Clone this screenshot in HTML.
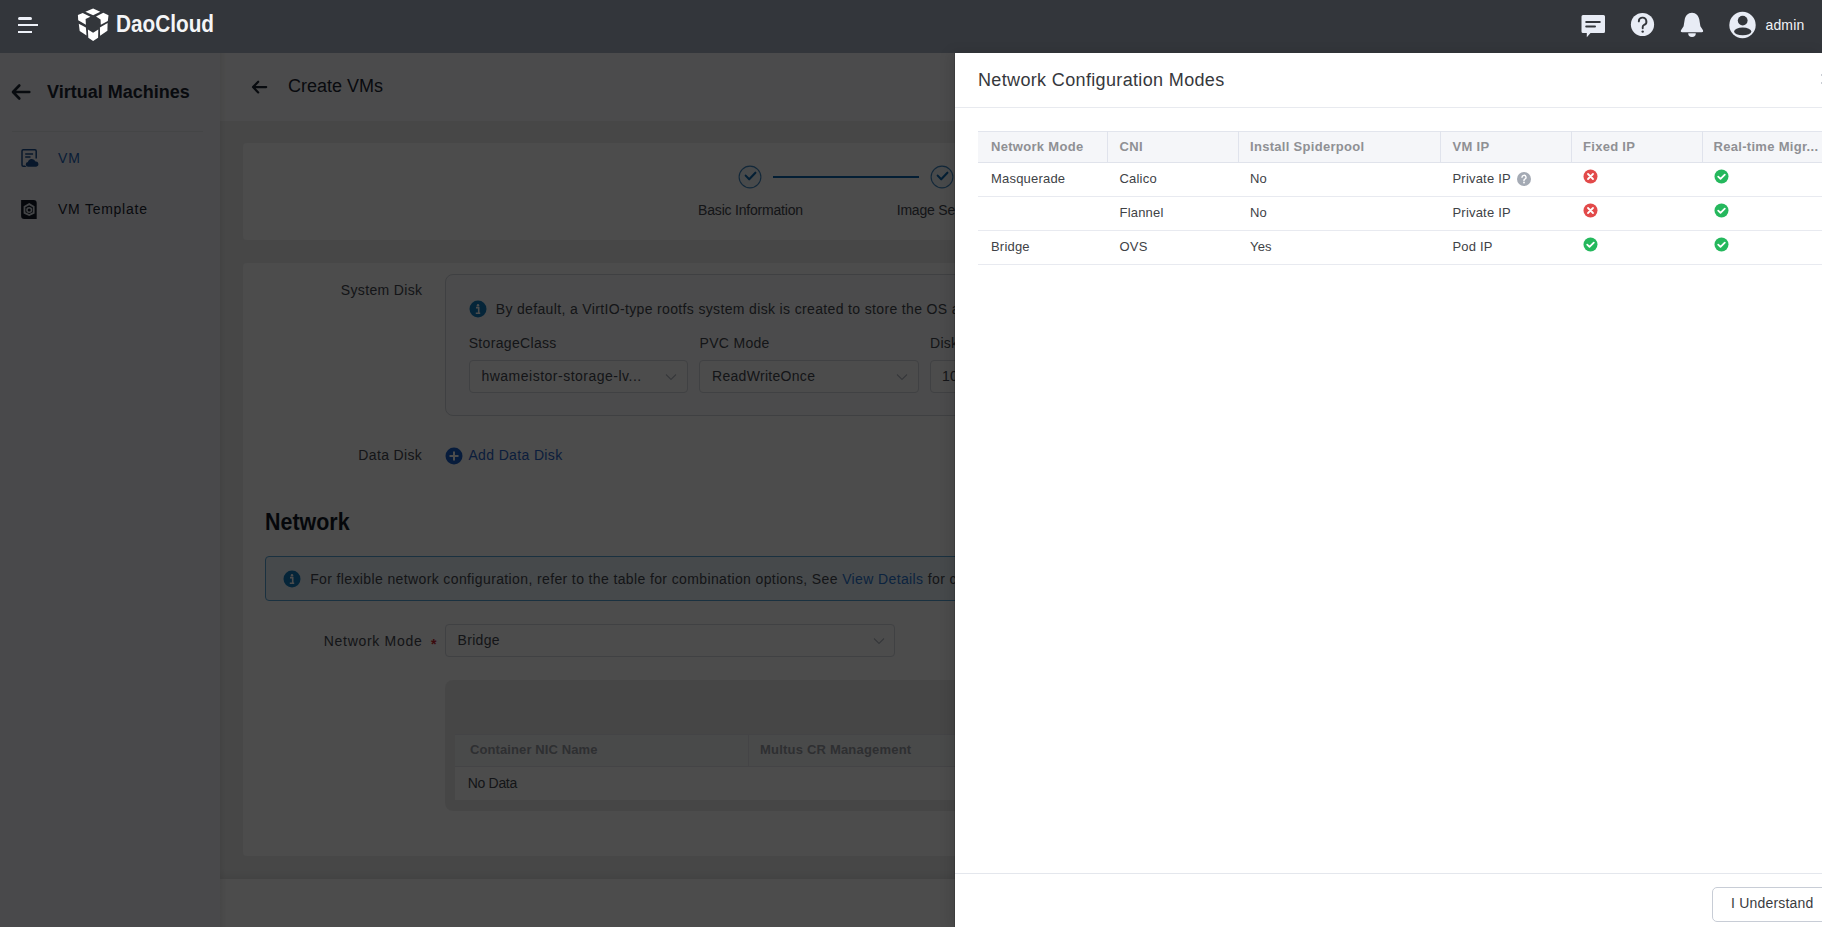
<!DOCTYPE html>
<html><head><meta charset="utf-8"><title>Create VMs</title>
<style>
html,body{margin:0;padding:0;}
body{width:1822px;height:927px;overflow:hidden;position:relative;font-family:"Liberation Sans", sans-serif;background:#f2f3f5;}
</style></head><body>
<div style="position:absolute;left:0px;top:0px;width:1822px;height:53px;background:#33363b;"></div>
<div style="position:absolute;left:0px;top:53px;width:220px;height:874px;background:#f4f6fa;"></div>
<div style="position:absolute;left:220px;top:53px;width:1602px;height:874px;background:#eeefef;"></div>
<div style="position:absolute;left:220px;top:53px;width:1602px;height:68px;background:#fcfcfd;"></div>
<div style="position:absolute;left:243px;top:143px;width:1556px;height:97px;background:#fdfdfd;border-radius:4px;"></div>
<div style="position:absolute;left:243px;top:263px;width:1556px;height:593px;background:#fdfdfd;border-radius:4px;"></div>
<div style="position:absolute;left:220px;top:869px;width:1602px;height:10px;background:linear-gradient(to bottom, rgba(0,0,0,0), rgba(0,0,0,0.06));"></div>
<div style="position:absolute;left:220px;top:879px;width:1602px;height:48px;background:#fdfdfd;"></div>
<div style="position:absolute;left:220px;top:53px;width:6px;height:874px;background:linear-gradient(to right, rgba(0,0,0,0.06), rgba(0,0,0,0));"></div>
<svg style="position:absolute;left:10px;top:82px" width="22" height="20" viewBox="0 0 22 20"><path d="M19.3 10H3.2M9.3 3.5L3 10L9.3 16.5" fill="none" stroke="#1c2533" stroke-width="2.6" stroke-linecap="round" stroke-linejoin="round"/></svg>
<div style="position:absolute;top:79.55px;font-size:18px;line-height:25px;color:#1c2533;font-weight:700;white-space:nowrap;left:47px;">Virtual Machines</div>
<div style="position:absolute;left:12px;top:131px;width:191px;height:1px;background:#e4e6ea;"></div>
<svg style="position:absolute;left:20px;top:148px" width="20" height="20" viewBox="0 0 20 20"><path d="M8 18.2H3.2A1.2 1.2 0 0 1 2 17V3A1.2 1.2 0 0 1 3.2 1.8H15A1.2 1.2 0 0 1 16.2 3V10.5" fill="none" stroke="#1d4f91" stroke-width="1.5"/><path d="M5.2 6H13.1M5.2 9H10.5" stroke="#1d4f91" stroke-width="1.5"/><path d="M8.2 18.7A2.3 2.3 0 0 1 7.9 14.1A4 4 0 0 1 15.5 13.5A2.6 2.6 0 0 1 16.1 18.7Z" fill="#1d4f91" stroke="#f4f6fa" stroke-width="1.2" paint-order="stroke"/></svg>
<div style="position:absolute;top:148.14px;font-size:14px;line-height:20px;color:#2463b8;font-weight:400;white-space:nowrap;letter-spacing:0.9px;left:58px;">VM</div>
<svg style="position:absolute;left:20px;top:199px" width="20" height="22" viewBox="0 0 20 22"><path d="M1.1 1.1H13.7A3 3 0 0 1 16.7 4.1V19.9H4.1A3 3 0 0 1 1.1 16.9Z" fill="#111a27"/><path d="M9.2 5.1L13.7 7.7V13.9L9.2 16.1L4.5 13.9V7.7Z" fill="none" stroke="#dfe5ec" stroke-width="1.8"/><circle cx="9.2" cy="11" r="2.3" fill="none" stroke="#dfe5ec" stroke-width="1.5"/></svg>
<div style="position:absolute;top:198.84px;font-size:14px;line-height:20px;color:#1c2533;font-weight:400;white-space:nowrap;letter-spacing:0.75px;left:58px;">VM Template</div>
<svg style="position:absolute;left:250px;top:78px" width="20" height="18" viewBox="0 0 20 18"><path d="M16.2 9.1H3.2M8.2 3.7L3 9.1l5.2 5.3" fill="none" stroke="#1c2533" stroke-width="2.2" stroke-linecap="round" stroke-linejoin="round"/></svg>
<div style="position:absolute;top:74.45px;font-size:18px;line-height:25px;color:#1c2533;font-weight:400;white-space:nowrap;left:288px;">Create VMs</div>
<svg style="position:absolute;left:738.4px;top:165px" width="24" height="24" viewBox="0 0 24 24"><circle cx="12" cy="12" r="10.9" fill="#f1f7fc" stroke="#3f86c0" stroke-width="1.1"/><path d="M7.7 10.6l3.5 3.7 6.2-6.6" fill="none" stroke="#0f6ab0" stroke-width="2.1" stroke-linecap="round" stroke-linejoin="round"/></svg>
<div style="position:absolute;left:773px;top:176px;width:146px;height:2px;background:#0d67ad;"></div>
<svg style="position:absolute;left:930px;top:165px" width="24" height="24" viewBox="0 0 24 24"><circle cx="12" cy="12" r="10.9" fill="#f1f7fc" stroke="#3f86c0" stroke-width="1.1"/><path d="M7.7 10.6l3.5 3.7 6.2-6.6" fill="none" stroke="#0f6ab0" stroke-width="2.1" stroke-linecap="round" stroke-linejoin="round"/></svg>
<div style="position:absolute;top:200.44px;font-size:14px;line-height:20px;color:#454950;font-weight:400;white-space:nowrap;letter-spacing:-0.2px;left:450.5px;width:600px;text-align:center;">Basic Information</div>
<div style="position:absolute;top:200.44px;font-size:14px;line-height:20px;color:#454950;font-weight:400;white-space:nowrap;letter-spacing:-0.2px;left:896.7px;">Image Settings</div>
<div style="position:absolute;top:280.34px;font-size:14px;line-height:20px;color:#454950;font-weight:400;white-space:nowrap;letter-spacing:0.35px;left:-177.60000000000002px;width:600px;text-align:right;margin-right:-0.35px;">System Disk</div>
<div style="position:absolute;left:445px;top:274px;width:1340px;height:142px;box-sizing:border-box;border:1px solid #d2d6dc;border-radius:8px;background:#fbfcfd;"></div>
<svg style="position:absolute;left:468.6px;top:300.3px" width="18" height="18" viewBox="0 0 18 18"><circle cx="9" cy="9" r="8.5" fill="#137cc0"/><circle cx="9" cy="5.2" r="1.2" fill="#fff"/><path d="M7 7.6h2.7v5.4M6.8 13.2h4.4" fill="none" stroke="#fff" stroke-width="1.6"/></svg>
<div style="position:absolute;top:299.24px;font-size:14px;line-height:20px;color:#454950;font-weight:400;white-space:nowrap;letter-spacing:0.35px;left:495.7px;">By default, a VirtIO-type rootfs system disk is created to store the OS and data. The disk is automatically deleted.</div>
<div style="position:absolute;top:332.84px;font-size:14px;line-height:20px;color:#454950;font-weight:400;white-space:nowrap;letter-spacing:0.33px;left:468.7px;">StorageClass</div>
<div style="position:absolute;top:332.84px;font-size:14px;line-height:20px;color:#454950;font-weight:400;white-space:nowrap;letter-spacing:0.3px;left:699.6px;">PVC Mode</div>
<div style="position:absolute;top:332.84px;font-size:14px;line-height:20px;color:#454950;font-weight:400;white-space:nowrap;letter-spacing:0.3px;left:930px;">Disk Capacity</div>
<div style="position:absolute;left:469px;top:360px;width:219px;height:33px;box-sizing:border-box;border:1px solid #d5d9e0;border-radius:4px;background:#fff;"></div>
<div style="position:absolute;top:366.04px;font-size:14px;line-height:20px;color:#454950;font-weight:400;white-space:nowrap;letter-spacing:0.5px;left:481.4px;">hwameistor-storage-lv...</div>
<svg style="position:absolute;left:665px;top:372.5px" width="12" height="8" viewBox="0 0 12 8"><path d="M1 1.5l5 5 5-5" fill="none" stroke="#b3b9c3" stroke-width="1.1"/></svg>
<div style="position:absolute;left:699px;top:360px;width:220px;height:33px;box-sizing:border-box;border:1px solid #d5d9e0;border-radius:4px;background:#fff;"></div>
<div style="position:absolute;top:366.04px;font-size:14px;line-height:20px;color:#454950;font-weight:400;white-space:nowrap;letter-spacing:0.3px;left:712px;">ReadWriteOnce</div>
<svg style="position:absolute;left:895.5px;top:372.5px" width="12" height="8" viewBox="0 0 12 8"><path d="M1 1.5l5 5 5-5" fill="none" stroke="#b3b9c3" stroke-width="1.1"/></svg>
<div style="position:absolute;left:930px;top:360px;width:220px;height:33px;box-sizing:border-box;border:1px solid #d5d9e0;border-radius:4px;background:#fff;"></div>
<div style="position:absolute;top:366.04px;font-size:14px;line-height:20px;color:#454950;font-weight:400;white-space:nowrap;letter-spacing:0.3px;left:942px;">10</div>
<svg style="position:absolute;left:1124px;top:372.5px" width="12" height="8" viewBox="0 0 12 8"><path d="M1 1.5l5 5 5-5" fill="none" stroke="#b3b9c3" stroke-width="1.1"/></svg>
<div style="position:absolute;top:445.14px;font-size:14px;line-height:20px;color:#454950;font-weight:400;white-space:nowrap;letter-spacing:0.35px;left:-177.8px;width:600px;text-align:right;margin-right:-0.35px;">Data Disk</div>
<svg style="position:absolute;left:445px;top:446.5px" width="18" height="18" viewBox="0 0 18 18"><circle cx="9" cy="9" r="8.5" fill="#1a5fc8"/><path d="M9 4.5v9M4.5 9h9" stroke="#fff" stroke-width="2"/></svg>
<div style="position:absolute;top:445.14px;font-size:14px;line-height:20px;color:#2a66c9;font-weight:400;white-space:nowrap;letter-spacing:0.36px;left:468.4px;">Add Data Disk</div>
<div style="position:absolute;top:504.67px;font-size:24px;line-height:34px;color:#111a27;font-weight:700;white-space:nowrap;left:264.5px;transform:scaleX(0.893);transform-origin:0 0;">Network</div>
<div style="position:absolute;left:265px;top:556px;width:1520px;height:45px;box-sizing:border-box;border:1px solid #58a6d8;border-radius:4px;background:#ebf5fb;"></div>
<svg style="position:absolute;left:283.4px;top:570.1px" width="18" height="18" viewBox="0 0 18 18"><circle cx="9" cy="9" r="8.5" fill="#137cc0"/><circle cx="9" cy="5.2" r="1.2" fill="#fff"/><path d="M7 7.6h2.7v5.4M6.8 13.2h4.4" fill="none" stroke="#fff" stroke-width="1.6"/></svg>
<div style="position:absolute;top:569.44px;font-size:14px;line-height:20px;color:#454950;font-weight:400;white-space:nowrap;letter-spacing:0.376px;left:310.2px;">For flexible network configuration, refer to the table for combination options, See <span style="color:#2a76d2">View Details</span> for combination options.</div>
<div style="position:absolute;top:631.14px;font-size:14px;line-height:20px;color:#454950;font-weight:400;white-space:nowrap;letter-spacing:0.7px;left:-177.60000000000002px;width:600px;text-align:right;margin-right:-0.7px;">Network Mode</div>
<div style="position:absolute;top:634.14px;font-size:14px;line-height:20px;color:#c8242f;font-weight:700;white-space:nowrap;left:431px;">*</div>
<div style="position:absolute;left:445px;top:624px;width:450px;height:33px;box-sizing:border-box;border:1px solid #d5d9e0;border-radius:4px;background:#fff;"></div>
<div style="position:absolute;top:630.04px;font-size:14px;line-height:20px;color:#454950;font-weight:400;white-space:nowrap;letter-spacing:0.3px;left:457.6px;">Bridge</div>
<svg style="position:absolute;left:872.5px;top:636.5px" width="12" height="8" viewBox="0 0 12 8"><path d="M1 1.5l5 5 5-5" fill="none" stroke="#b3b9c3" stroke-width="1.1"/></svg>
<div style="position:absolute;left:445px;top:680px;width:1340px;height:131px;background:#ececec;border-radius:8px;"></div>
<div style="position:absolute;left:455px;top:735px;width:1320px;height:65px;background:#fff;"></div>
<div style="position:absolute;left:455px;top:734px;width:1320px;height:33px;background:#f6f7f9;border-top:1px solid #e3e5e9;border-bottom:1px solid #e3e5e9;box-sizing:border-box;"></div>
<div style="position:absolute;left:748px;top:735px;width:1px;height:31px;background:#e3e5e9;"></div>
<div style="position:absolute;top:740.69px;font-size:13px;line-height:18px;color:#9a9ea6;font-weight:700;white-space:nowrap;letter-spacing:0.1px;left:470px;">Container NIC Name</div>
<div style="position:absolute;top:740.69px;font-size:13px;line-height:18px;color:#9a9ea6;font-weight:700;white-space:nowrap;letter-spacing:0.2px;left:760px;">Multus CR Management</div>
<div style="position:absolute;top:773.44px;font-size:14px;line-height:20px;color:#454950;font-weight:400;white-space:nowrap;letter-spacing:-0.3px;left:467.7px;">No Data</div>
<div style="position:absolute;left:0px;top:53px;width:1822px;height:874px;background:rgba(0,0,0,0.7);"></div>
<div style="position:absolute;left:955px;top:53px;width:867px;height:874px;background:#fff;box-shadow:-4px 0 12px rgba(0,0,0,0.12);"></div>
<div style="position:absolute;left:954px;top:53px;width:1px;height:874px;background:rgba(0,0,0,0.12);"></div>
<div style="position:absolute;top:68.25px;font-size:18px;line-height:25px;color:#36383c;font-weight:400;white-space:nowrap;letter-spacing:0.35px;left:978px;">Network Configuration Modes</div>
<div style="position:absolute;left:955px;top:107px;width:867px;height:1px;background:#e8eaef;"></div>
<div style="position:absolute;left:978px;top:131px;width:900px;height:31px;background:#f5f6f9;"></div>
<div style="position:absolute;left:978px;top:131px;width:900px;height:1px;background:#e2e5ed;"></div>
<div style="position:absolute;left:978px;top:162px;width:900px;height:1px;background:#e0e3eb;"></div>
<div style="position:absolute;left:1107px;top:131px;width:1px;height:31px;background:#e0e3ec;"></div>
<div style="position:absolute;left:1238px;top:131px;width:1px;height:31px;background:#e0e3ec;"></div>
<div style="position:absolute;left:1440px;top:131px;width:1px;height:31px;background:#e0e3ec;"></div>
<div style="position:absolute;left:1571px;top:131px;width:1px;height:31px;background:#e0e3ec;"></div>
<div style="position:absolute;left:1702px;top:131px;width:1px;height:31px;background:#e0e3ec;"></div>
<div style="position:absolute;left:978px;top:196px;width:900px;height:1px;background:#e8eaf0;"></div>
<div style="position:absolute;left:978px;top:230px;width:900px;height:1px;background:#e8eaf0;"></div>
<div style="position:absolute;left:978px;top:264px;width:900px;height:1px;background:#e8eaf0;"></div>
<div style="position:absolute;top:137.79px;font-size:13px;line-height:18px;color:#8f9094;font-weight:700;white-space:nowrap;letter-spacing:0.3px;left:991px;">Network Mode</div>
<div style="position:absolute;top:137.79px;font-size:13px;line-height:18px;color:#8f9094;font-weight:700;white-space:nowrap;letter-spacing:0.3px;left:1119.5px;">CNI</div>
<div style="position:absolute;top:137.79px;font-size:13px;line-height:18px;color:#8f9094;font-weight:700;white-space:nowrap;letter-spacing:0.3px;left:1250px;">Install Spiderpool</div>
<div style="position:absolute;top:137.79px;font-size:13px;line-height:18px;color:#8f9094;font-weight:700;white-space:nowrap;letter-spacing:0.3px;left:1452.5px;">VM IP</div>
<div style="position:absolute;top:137.79px;font-size:13px;line-height:18px;color:#8f9094;font-weight:700;white-space:nowrap;letter-spacing:0.3px;left:1583px;">Fixed IP</div>
<div style="position:absolute;top:137.79px;font-size:13px;line-height:18px;color:#8f9094;font-weight:700;white-space:nowrap;letter-spacing:0.3px;left:1713.5px;">Real-time Migr...</div>
<div style="position:absolute;top:169.79px;font-size:13px;line-height:18px;color:#404246;font-weight:400;white-space:nowrap;letter-spacing:0.2px;left:991px;">Masquerade</div>
<div style="position:absolute;top:169.79px;font-size:13px;line-height:18px;color:#404246;font-weight:400;white-space:nowrap;letter-spacing:0.2px;left:1119.5px;">Calico</div>
<div style="position:absolute;top:169.79px;font-size:13px;line-height:18px;color:#404246;font-weight:400;white-space:nowrap;letter-spacing:0.2px;left:1250px;">No</div>
<div style="position:absolute;top:169.79px;font-size:13px;line-height:18px;color:#404246;font-weight:400;white-space:nowrap;letter-spacing:0.2px;left:1452.5px;">Private IP</div>
<svg style="position:absolute;left:1583.0px;top:169.2px" width="15" height="15" viewBox="0 0 15 15"><circle cx="7.5" cy="7.5" r="7" fill="#e24a4a"/><path d="M5 5l5 5M10 5l-5 5" fill="none" stroke="#fff" stroke-width="1.8" stroke-linecap="round"/></svg>
<svg style="position:absolute;left:1714.0px;top:169.2px" width="15" height="15" viewBox="0 0 15 15"><circle cx="7.5" cy="7.5" r="7" fill="#25b85d"/><path d="M4.2 7.6l2.3 2.3 4.3-4.3" fill="none" stroke="#fff" stroke-width="1.8" stroke-linecap="round" stroke-linejoin="round"/></svg>
<div style="position:absolute;top:203.79px;font-size:13px;line-height:18px;color:#404246;font-weight:400;white-space:nowrap;letter-spacing:0.2px;left:1119.5px;">Flannel</div>
<div style="position:absolute;top:203.79px;font-size:13px;line-height:18px;color:#404246;font-weight:400;white-space:nowrap;letter-spacing:0.2px;left:1250px;">No</div>
<div style="position:absolute;top:203.79px;font-size:13px;line-height:18px;color:#404246;font-weight:400;white-space:nowrap;letter-spacing:0.2px;left:1452.5px;">Private IP</div>
<svg style="position:absolute;left:1583.0px;top:203.0px" width="15" height="15" viewBox="0 0 15 15"><circle cx="7.5" cy="7.5" r="7" fill="#e24a4a"/><path d="M5 5l5 5M10 5l-5 5" fill="none" stroke="#fff" stroke-width="1.8" stroke-linecap="round"/></svg>
<svg style="position:absolute;left:1714.0px;top:203.0px" width="15" height="15" viewBox="0 0 15 15"><circle cx="7.5" cy="7.5" r="7" fill="#25b85d"/><path d="M4.2 7.6l2.3 2.3 4.3-4.3" fill="none" stroke="#fff" stroke-width="1.8" stroke-linecap="round" stroke-linejoin="round"/></svg>
<div style="position:absolute;top:237.79px;font-size:13px;line-height:18px;color:#404246;font-weight:400;white-space:nowrap;letter-spacing:0.2px;left:991px;">Bridge</div>
<div style="position:absolute;top:237.79px;font-size:13px;line-height:18px;color:#404246;font-weight:400;white-space:nowrap;letter-spacing:0.2px;left:1119.5px;">OVS</div>
<div style="position:absolute;top:237.79px;font-size:13px;line-height:18px;color:#404246;font-weight:400;white-space:nowrap;letter-spacing:0.2px;left:1250px;">Yes</div>
<div style="position:absolute;top:237.79px;font-size:13px;line-height:18px;color:#404246;font-weight:400;white-space:nowrap;letter-spacing:0.2px;left:1452.5px;">Pod IP</div>
<svg style="position:absolute;left:1583.0px;top:237.2px" width="15" height="15" viewBox="0 0 15 15"><circle cx="7.5" cy="7.5" r="7" fill="#25b85d"/><path d="M4.2 7.6l2.3 2.3 4.3-4.3" fill="none" stroke="#fff" stroke-width="1.8" stroke-linecap="round" stroke-linejoin="round"/></svg>
<svg style="position:absolute;left:1714.0px;top:237.2px" width="15" height="15" viewBox="0 0 15 15"><circle cx="7.5" cy="7.5" r="7" fill="#25b85d"/><path d="M4.2 7.6l2.3 2.3 4.3-4.3" fill="none" stroke="#fff" stroke-width="1.8" stroke-linecap="round" stroke-linejoin="round"/></svg>
<svg style="position:absolute;left:1517px;top:171.5px" width="14" height="14" viewBox="0 0 14 14"><circle cx="7" cy="7" r="7" fill="#a4aab4"/><path d="M5 5.3a2 2 0 1 1 2.7 1.9c-.5.2-.7.5-.7 1v.6" fill="none" stroke="#fff" stroke-width="1.4" stroke-linecap="round"/><circle cx="7" cy="10.6" r=".9" fill="#fff"/></svg>
<div style="position:absolute;left:1821px;top:74px;width:1px;height:2px;background:#c9cdd4;"></div>
<div style="position:absolute;left:1821px;top:82px;width:1px;height:2px;background:#c9cdd4;"></div>
<div style="position:absolute;left:955px;top:873px;width:867px;height:1px;background:#e4e7ed;"></div>
<div style="position:absolute;left:1712px;top:887px;width:140px;height:35px;box-sizing:border-box;border:1px solid #c8cdd6;border-radius:5px;background:#fff;"></div>
<div style="position:absolute;top:893.14px;font-size:14px;line-height:20px;color:#3a3c40;font-weight:400;white-space:nowrap;letter-spacing:0.2px;left:1731px;">I Understand</div>
<div style="position:absolute;left:18px;top:17px;width:14px;height:3px;background:#eef1f8;border-radius:1.5px;"></div>
<div style="position:absolute;left:18px;top:24px;width:20px;height:2px;background:#eef1f8;"></div>
<div style="position:absolute;left:18px;top:31px;width:14px;height:2px;background:#eef1f8;"></div>
<svg style="position:absolute;left:0;top:0" width="120" height="50" viewBox="0 0 120 50"><g fill="#fff">
<path d="M85.4 11.7L93.1 8.5L100.3 11.7L93.1 15.3Z"/>
<path d="M77.9 15.1L82.7 13.1L90.4 16.7L85.6 18.9L85.9 24.8L78.2 20.3Z"/>
<path d="M96 16.5L103.3 12.8L108.5 15.3L107.8 21L100.8 24.8L100.6 19.4Z"/>
<path d="M78.8 23.7L85.9 27.6L86.5 35.5L79.7 31Z"/>
<path d="M107.6 23L107.4 30.7L100.1 35.7L99.9 27.5Z"/>
<path d="M87.9 29.6L93.1 32.8L98.3 29.6L98.1 37.7L93.1 40.9L88.3 37.7Z"/>
</g></svg>
<div style="position:absolute;top:6.67px;font-size:24px;line-height:34px;color:#f4f5f7;font-weight:700;white-space:nowrap;left:116px;transform:scaleX(0.865);transform-origin:0 0;">DaoCloud</div>
<svg style="position:absolute;left:1580px;top:13px" width="26" height="26" viewBox="0 0 26 26">
<path d="M3 2h20.5a1.5 1.5 0 0 1 1.5 1.5v15a1.5 1.5 0 0 1-1.5 1.5H10.5L6.8 24.2v-4.2H3a1.5 1.5 0 0 1-1.5-1.5V3.5A1.5 1.5 0 0 1 3 2z" fill="#e8ecf5"/>
<path d="M6.2 8.9h13.6M6.2 13.6h8.8" stroke="#33363b" stroke-width="2" stroke-linecap="round"/></svg>
<svg style="position:absolute;left:1630px;top:12px" width="26" height="26" viewBox="0 0 26 26">
<circle cx="12.5" cy="12.5" r="11.6" fill="#e8ecf5"/>
<path d="M8.8 9.4a3.8 3.8 0 1 1 5.3 3.5c-.9.4-1.4 1-1.4 2v1.4" fill="none" stroke="#33363b" stroke-width="1.9" stroke-linecap="round"/>
<circle cx="12.7" cy="19.6" r="1.2" fill="#33363b"/></svg>
<svg style="position:absolute;left:1679px;top:11px" width="26" height="28" viewBox="0 0 26 28">
<path d="M13 1.8C9 1.8 6.3 4.8 5.7 8.6L4.6 15.3L2 19.3Q1.2 21.2 3.2 21.2H22.8Q24.8 21.2 24 19.3L21.4 15.3L20.3 8.6C19.7 4.8 17 1.8 13 1.8Z" fill="#e8ecf5"/>
<path d="M9.2 22.3h7.6a3.8 3.8 0 0 1-7.6 0z" fill="#e8ecf5"/></svg>
<svg style="position:absolute;left:1728px;top:11px" width="29" height="29" viewBox="0 0 29 29">
<circle cx="14.5" cy="14" r="13.2" fill="#e8ecf5"/>
<circle cx="14.7" cy="9.6" r="4.9" fill="#33363b"/>
<ellipse cx="14.7" cy="20.4" rx="8.6" ry="3.9" fill="#33363b"/></svg>
<div style="position:absolute;top:15.04px;font-size:14px;line-height:20px;color:#f0f2f6;font-weight:400;white-space:nowrap;letter-spacing:0.2px;left:1765.4px;">admin</div>
</body></html>
